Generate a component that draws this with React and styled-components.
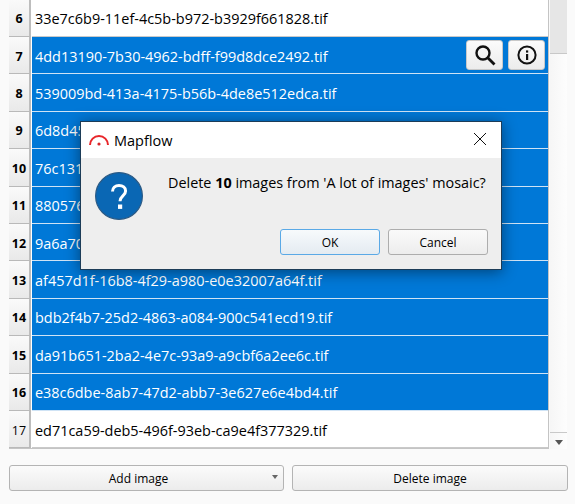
import React from "react";
import styled, { createGlobalStyle } from "styled-components";

const Global = createGlobalStyle`
  html, body { margin: 0; padding: 0; background: #fafafa; }
  body { width: 575px; height: 504px; overflow: hidden; font-family: "Open Sans", "Noto Sans", sans-serif; color: #000; }
`;
const Page = styled.div`
  position: relative;
  width: 575px;
  height: 504px;
  display: flex;
  flex-direction: column;
  padding: 0 7px 0 9px;
  box-sizing: border-box;
`;
const TableArea = styled.div`
  display: flex;
  height: 449px;
  overflow: hidden;
`;
const Table = styled.div`
  width: 540px;
  flex: none;
  border-right: 1px solid #c4c4c4;
  border-bottom: 1px solid #c4c4c4;
  box-sizing: border-box;
  height: 449px;
  background: #fff;
  overflow: hidden;
  margin-top: -0.4px;
`;
const Row = styled.div`
  display: flex;
  height: 37.4px;
  box-sizing: border-box;
  position: relative;
`;
const RowHead = styled.div`
  width: 22px;
  flex: none;
  box-sizing: border-box;
  display: flex;
  align-items: center;
  justify-content: center;
  padding-top: 2px;
  background: linear-gradient(#fafafa, #e9e9e9);
  border-right: 2px solid #bdbdbd;
  border-bottom: 1px solid #b9b9b9;
  font-size: 12.5px;
  font-weight: ${p => (p.$bold ? 700 : 400)};
`;
const Cell = styled.div`
  flex: 1;
  min-width: 0;
  display: flex;
  align-items: center;
  padding: 2px 0 0 3px;
  font-size: 14.45px;
  box-sizing: border-box;
  background: ${p => (p.$selected ? "#0078d7" : "#fff")};
  color: ${p => (p.$selected ? "#fff" : "#000")};
  border-bottom: 1px solid ${p => (p.$selected ? "#cfe3f5" : "#c9c9c9")};
  margin-left: 1px;
`;
const RowActions = styled.div`
  position: absolute;
  right: 3px;
  top: 3px;
  display: flex;
  gap: 5px;
`;
const IconButton = styled.button`
  width: 37px;
  height: 30px;
  padding: 0;
  display: flex;
  align-items: center;
  justify-content: center;
  border: 1px solid #c9c9c9;
  border-radius: 3px;
  background: linear-gradient(#fbfbfb, #ececec);
`;
const Scrollbar = styled.div`
  width: 17px;
  margin-left: 1px;
  flex: none;
  display: flex;
  flex-direction: column;
  height: 449px;
  background: linear-gradient(90deg, #f6f6f6, #fdfdfd);
`;
const Thumb = styled.div`
  height: 54px;
  flex: none;
  box-sizing: border-box;
  background: #e6e6e6;
  border-bottom: 1px solid #c8c8c8;
`;
const Track = styled.div`
  flex: 1;
`;
const ArrowBox = styled.div`
  height: 17px;
  box-sizing: border-box;
  border-top: 1px solid #c9c9c9;
  padding-top: 2px;
  display: flex;
  align-items: center;
  justify-content: center;
`;
const Arrow = styled.span`
  width: 0;
  height: 0;
  border-left: 4.5px solid transparent;
  border-right: 4.5px solid transparent;
  border-top: 5px solid #555;
`;
const Footer = styled.div`
  display: grid;
  grid-template-columns: 275px 276px;
  gap: 8px;
  margin-top: 16px;
`;
const FooterButton = styled.button`
  position: relative;
  height: 26px;
  padding: 0 ${p => (p.$menu ? "16px" : "0")} 0 0;
  border: 1px solid #b4b4b4;
  border-radius: 3px;
  background: linear-gradient(#fbfbfb, #ececec);
  font: 12px "Open Sans", sans-serif;
  color: #000;
`;
const MenuArrow = styled.span`
  position: absolute;
  right: 5px;
  top: 9px;
  width: 0;
  height: 0;
  border-left: 3.5px solid transparent;
  border-right: 3.5px solid transparent;
  border-top: 4px solid #666;
`;
const Dialog = styled.div`
  position: absolute;
  left: 80px;
  top: 121px;
  width: 422px;
  height: 149px;
  box-sizing: border-box;
  border: 1px solid #1c3c58;
  background: #eeeeee;
  display: flex;
  flex-direction: column;
  box-shadow: 0 2px 14px rgba(0, 0, 0, 0.45);
`;
const TitleBar = styled.div`
  height: 36px;
  flex: none;
  background: #fff;
  display: flex;
  align-items: center;
  padding: 0 15px 0 8px;
  gap: 5px;
  font-size: 14.5px;
`;
const Title = styled.span`
  flex: 1;
`;
const CloseBox = styled.span`
  display: flex;
  margin-bottom: 2px;
`;
const DialogBody = styled.div`
  flex: 1;
  display: flex;
  padding: 14px 0 0 14px;
  position: relative;
`;
const Message = styled.div`
  margin-left: 25px;
  padding-top: 1px;
  font-size: 14.4px;
  line-height: 20px;
  white-space: nowrap;
`;
const DialogButtons = styled.div`
  position: absolute;
  right: 13px;
  bottom: 14px;
  display: flex;
  gap: 8px;
`;
const DialogButton = styled.button`
  width: 100px;
  height: 26px;
  padding: 0;
  border-radius: 3px;
  border: 1px solid ${p => (p.$primary ? "#5aa9e6" : "#adadad")};
  background: ${p => (p.$primary ? "linear-gradient(#f7fafc, #e4ebf1)" : "linear-gradient(#fafafa, #ededed)")};
  font: 12px "Open Sans", sans-serif;
  color: #000;
`;

const SearchIcon = () => (
  <svg width="22" height="22" viewBox="0 0 22 22" fill="none" stroke="#111" strokeWidth="2.4">
    <circle cx="9" cy="9" r="6.5" />
    <path d="M14 14l6.5 6.5" strokeWidth="2.8" />
  </svg>
);
const InfoIcon = () => (
  <svg width="20" height="20" viewBox="0 0 20 20" fill="none">
    <circle cx="10" cy="10" r="8.6" stroke="#111" strokeWidth="2" />
    <rect x="9" y="9" width="2.2" height="6" fill="#111" />
    <rect x="9" y="5.4" width="2.2" height="2.2" fill="#111" />
  </svg>
);
const CloseIcon = () => (
  <svg width="12" height="12" viewBox="0 0 12 12" stroke="#111" strokeWidth="1" fill="none">
    <path d="M0 0l12 12M12 0L0 12" />
  </svg>
);
const Logo = () => (
  <svg width="20" height="12" viewBox="0 0 20 12" fill="none">
    <path d="M1 11 A9 9 0 0 1 19 11" stroke="#e8262a" strokeWidth="2" />
    <circle cx="10" cy="10" r="1.6" fill="#d8262a" />
  </svg>
);
const QuestionIcon = () => (
  <svg width="48" height="48" viewBox="0 0 48 48">
    <circle cx="24" cy="24" r="23.4" fill="#0a67b4" stroke="#2b5a85" strokeWidth="1.2" />
    <path d="M17.5 19.5c0-3.6 2.8-6 6.5-6 3.8 0 6.6 2.2 6.6 5.4 0 5-5.6 5-5.6 10.3" fill="none" stroke="#fff" strokeWidth="3" />
    <rect x="23" y="32.5" width="4.2" height="4.4" fill="#fff" />
  </svg>
);

const rows = [
  [6, "33e7c6b9-11ef-4c5b-b972-b3929f661828.tif", false, true],
  [7, "4dd13190-7b30-4962-bdff-f99d8dce2492.tif", true, true],
  [8, "539009bd-413a-4175-b56b-4de8e512edca.tif", true, true],
  [9, "6d8d45a1-3c0e-4b7a-9f21-7d1c5ea0b3f4.tif", true, true],
  [10, "76c13118-52ab-4d60-8e3f-1a9b0c7de245.tif", true, true],
  [11, "88057633-a1d4-49c2-b7e0-5f3c2d8a6e19.tif", true, true],
  [12, "9a6a70c4-e8f1-4a35-96d2-c40b1e7f3a58.tif", true, true],
  [13, "af457d1f-16b8-4f29-a980-e0e32007a64f.tif", true, true],
  [14, "bdb2f4b7-25d2-4863-a084-900c541ecd19.tif", true, true],
  [15, "da91b651-2ba2-4e7c-93a9-a9cbf6a2ee6c.tif", true, true],
  [16, "e38c6dbe-8ab7-47d2-abb7-3e627e6e4bd4.tif", true, true],
  [17, "ed71ca59-deb5-496f-93eb-ca9e4f377329.tif", false, false],
];

export default function App() {
  return (
    <Page>
      <Global />
      <TableArea>
        <Table>
          {rows.map(([n, name, selected, bold]) => (
            <Row key={n}>
              <RowHead $bold={bold}>{n}</RowHead>
              <Cell $selected={selected}>{name}</Cell>
              {n === 7 && (
                <RowActions>
                  <IconButton aria-label="Search"><SearchIcon /></IconButton>
                  <IconButton aria-label="Info"><InfoIcon /></IconButton>
                </RowActions>
              )}
            </Row>
          ))}
        </Table>
        <Scrollbar>
          <Thumb />
          <Track />
          <ArrowBox><Arrow /></ArrowBox>
        </Scrollbar>
      </TableArea>
      <Footer>
        <FooterButton $menu>Add image<MenuArrow /></FooterButton>
        <FooterButton>Delete image</FooterButton>
      </Footer>
      <Dialog>
        <TitleBar>
          <Logo />
          <Title>Mapflow</Title>
          <CloseBox><CloseIcon /></CloseBox>
        </TitleBar>
        <DialogBody>
          <QuestionIcon />
          <Message>Delete <b>10</b> images from 'A lot of images' mosaic?</Message>
          <DialogButtons>
            <DialogButton $primary>OK</DialogButton>
            <DialogButton>Cancel</DialogButton>
          </DialogButtons>
        </DialogBody>
      </Dialog>
    </Page>
  );
}
